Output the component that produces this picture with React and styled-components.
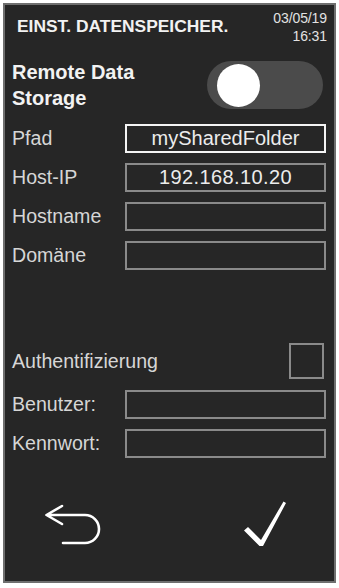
import React from 'react';
import styled, { createGlobalStyle } from 'styled-components';

const GlobalStyle = createGlobalStyle`
  html, body {
    margin: 0;
    padding: 0;
    background: #ffffff;
  }
  body {
    font-family: "Liberation Sans", Arial, Helvetica, sans-serif;
  }
`;

const Screen = styled.div`
  box-sizing: border-box;
  width: 333px;
  height: 580px;
  margin: 3px;
  border: 2px solid #6f6f6f;
  background: #262626;
  display: flex;
  flex-direction: column;
`;

const Header = styled.div`
  display: flex;
  justify-content: space-between;
  align-items: flex-start;
  padding: 5px 7px 0 12px;
`;

const Title = styled.h1`
  margin: 4px 0 0;
  font-size: 17.4px;
  line-height: 24px;
  font-weight: 700;
  color: #f2f2f2;
`;

const DateTime = styled.div`
  text-align: right;
  font-size: 14px;
  line-height: 17.5px;
  letter-spacing: -0.1px;
  color: #e2e2e2;
`;

const ToggleRow = styled.div`
  display: flex;
  justify-content: space-between;
  align-items: center;
  margin-top: 14px;
  padding: 0 11px 0 7px;
`;

const ToggleLabel = styled.div`
  max-width: 150px;
  font-size: 20px;
  line-height: 26px;
  font-weight: 700;
  color: #f2f2f2;
`;

const Track = styled.div`
  width: 116px;
  height: 48px;
  border-radius: 24px;
  background: #4b4b4b;
  display: flex;
  align-items: center;
  padding-left: ${({ $on }) => ($on ? '71px' : '10px')};
  box-sizing: border-box;
`;

const Knob = styled.div`
  width: 43px;
  height: 43px;
  border-radius: 50%;
  background: #ffffff;
`;

const FieldGroup = styled.div`
  display: grid;
  grid-template-columns: 113px 1fr;
  grid-auto-rows: 29px;
  row-gap: 10px;
  align-items: center;
  margin-top: ${({ $top }) => $top}px;
  padding: 0 8px 0 7px;
`;

const Label = styled.div`
  font-size: 19.6px;
  color: #d6d6d6;
  white-space: nowrap;
`;

const Input = styled.div`
  box-sizing: border-box;
  height: 29px;
  border: 2px solid ${({ $active }) => ($active ? '#f4f4f4' : '#8a8a8a')};
  display: flex;
  align-items: center;
  justify-content: center;
  font-size: 20px;
  letter-spacing: ${({ $spread }) => ($spread ? '0.4px' : '0')};
  color: #ececec;
`;

const CheckRow = styled.div`
  display: flex;
  justify-content: space-between;
  align-items: center;
  margin-top: 73px;
  padding: 0 10px 0 7px;
`;

const CheckBox = styled.div`
  box-sizing: border-box;
  width: 35px;
  height: 36px;
  border: 2px solid #8a8a8a;
`;

const Footer = styled.div`
  display: flex;
  justify-content: space-between;
  align-items: center;
  margin-top: auto;
  padding: 0 44px 30px 37px;
`;

const IconButton = styled.button`
  background: none;
  border: none;
  padding: 0;
  display: flex;
  color: #ffffff;
`;

const BackIcon = () => (
  <svg width="60" height="44" viewBox="0 0 60 44" fill="none">
    <path
      d="M20 3 L4.5 12 L20 21 M4.5 12 H43 A14 14 0 0 1 43 40 H21"
      stroke="#ffffff"
      strokeWidth="2.6"
      strokeLinecap="round"
      strokeLinejoin="round"
    />
  </svg>
);

const CheckIcon = () => (
  <svg width="48" height="52" viewBox="0 0 48 52">
    <path d="M2 31.5 L6 28 L19 41 L41.5 2.5 L44 4 L21 47 L17.5 47 Z" fill="#ffffff" />
  </svg>
);

const fields = [
  { label: 'Pfad', value: 'mySharedFolder', active: true },
  { label: 'Host-IP', value: '192.168.10.20', spread: true },
  { label: 'Hostname', value: '' },
  { label: 'Domäne', value: '' },
];

const credentials = [
  { label: 'Benutzer:', value: '' },
  { label: 'Kennwort:', value: '' },
];

const App = () => {
  return (
    <>
      <GlobalStyle />
      <Screen>
        <Header>
          <Title>EINST. DATENSPEICHER.</Title>
          <DateTime>
            03/05/19
            <br />
            16:31
          </DateTime>
        </Header>

        <ToggleRow>
          <ToggleLabel>Remote Data Storage</ToggleLabel>
          <Track>
            <Knob />
          </Track>
        </ToggleRow>

        <FieldGroup $top={13}>
          {fields.map((f) => (
            <React.Fragment key={f.label}>
              <Label>{f.label}</Label>
              <Input $active={f.active} $spread={f.spread}>
                {f.value}
              </Input>
            </React.Fragment>
          ))}
        </FieldGroup>

        <CheckRow>
          <Label>Authentifizierung</Label>
          <CheckBox />
        </CheckRow>

        <FieldGroup $top={11}>
          {credentials.map((f) => (
            <React.Fragment key={f.label}>
              <Label>{f.label}</Label>
              <Input>{f.value}</Input>
            </React.Fragment>
          ))}
        </FieldGroup>

        <Footer>
          <IconButton>
            <BackIcon />
          </IconButton>
          <IconButton>
            <CheckIcon />
          </IconButton>
        </Footer>
      </Screen>
    </>
  );
};

export default App;
